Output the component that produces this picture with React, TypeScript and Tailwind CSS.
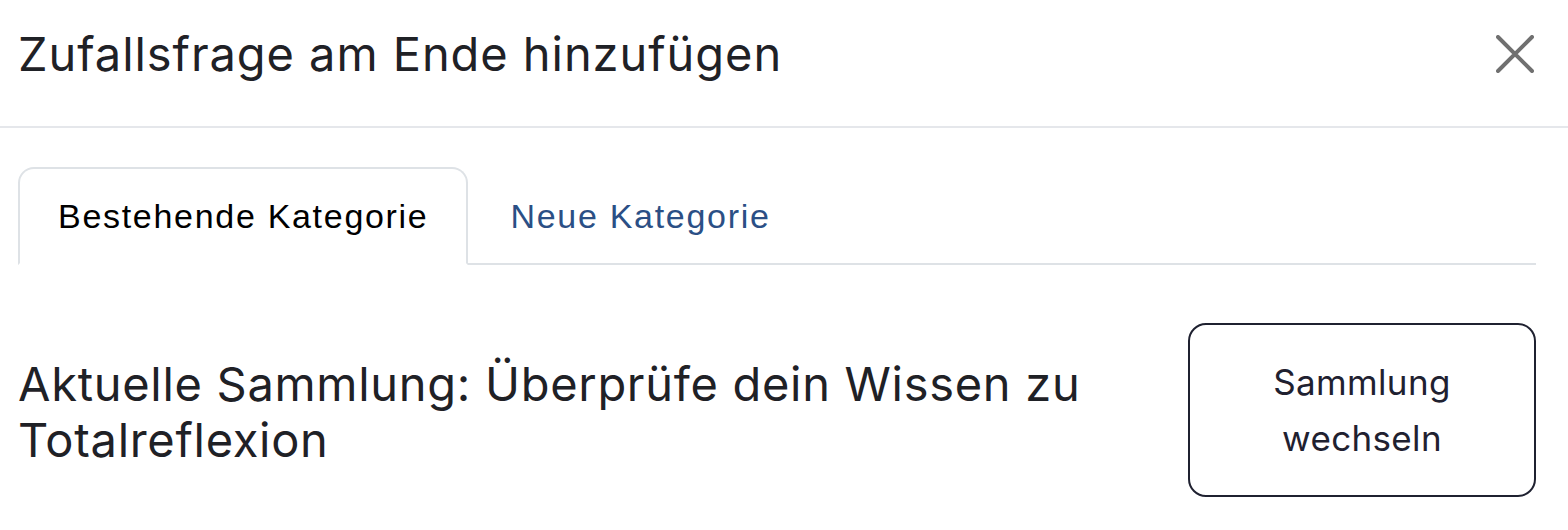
import React, { useState } from 'react';

const headingFont = { fontFamily: 'Inter, "Noto Sans", sans-serif' };

export default function App() {
    const [tab, setTab] = useState<'existing' | 'new'>('existing');

    return (
        <div className="w-[1568px] h-[530px] bg-white overflow-hidden">
            {/* Header */}
            <div className="h-[128px] pl-[18px] pr-[34px] pb-[18px] flex items-center justify-between border-b-2 border-[#e5e7eb]">
                <h2 className="text-[47px] font-normal text-[#1f2126] tracking-[0.02em]" style={headingFont}>
                    Zufallsfrage am Ende hinzufügen
                </h2>
                <button className="w-[38px] h-[38px] flex items-center justify-center text-[#707070]">
                    <svg viewBox="0 0 38 38" className="w-[38px] h-[38px]" fill="none" stroke="currentColor" strokeWidth="4" strokeLinecap="round">
                        <path d="M2 2 L36 36 M36 2 L2 36" />
                    </svg>
                </button>
            </div>

            <div className="pl-[18px] pr-[32px] pt-[39px]">
                {/* Tabs */}
                <div className="flex border-b-2 border-[#dee2e6]" style={{ fontFamily: '"Liberation Sans", Arial, sans-serif' }}>
                    <button
                        onClick={() => setTab('existing')}
                        className={`h-[98px] px-[38px] text-[34px] tracking-[0.05em] rounded-t-[16px] -mb-[2px] border-2 ${
                            tab === 'existing' ? 'border-[#dee2e6] border-b-white bg-white text-black' : 'border-transparent text-[#2b4f85]'
                        }`}
                    >
                        Bestehende Kategorie
                    </button>
                    <button
                        onClick={() => setTab('new')}
                        className={`h-[98px] px-[40px] text-[34px] tracking-[0.05em] rounded-t-[16px] -mb-[2px] border-2 ${
                            tab === 'new' ? 'border-[#dee2e6] border-b-white bg-white text-black' : 'border-transparent text-[#2b4f85]'
                        }`}
                    >
                        Neue Kategorie
                    </button>
                </div>

                {/* Current collection */}
                <div className="flex items-start justify-between pt-[58px]">
                    <h3 className="text-[47px] leading-[56px] tracking-[0.015em] text-[#1f2126] pt-[33px] max-w-[1100px]" style={headingFont}>
                        Aktuelle Sammlung: Überprüfe dein Wissen zu Totalreflexion
                    </h3>
                    <button
                        className="w-[348px] h-[174px] shrink-0 border-2 border-[#1f2130] rounded-[18px] text-[35px] leading-[56px] tracking-[0.01em] text-[#1f2130]"
                        style={headingFont}
                    >
                        Sammlung
                        <br />
                        wechseln
                    </button>
                </div>
            </div>
        </div>
    );
}
